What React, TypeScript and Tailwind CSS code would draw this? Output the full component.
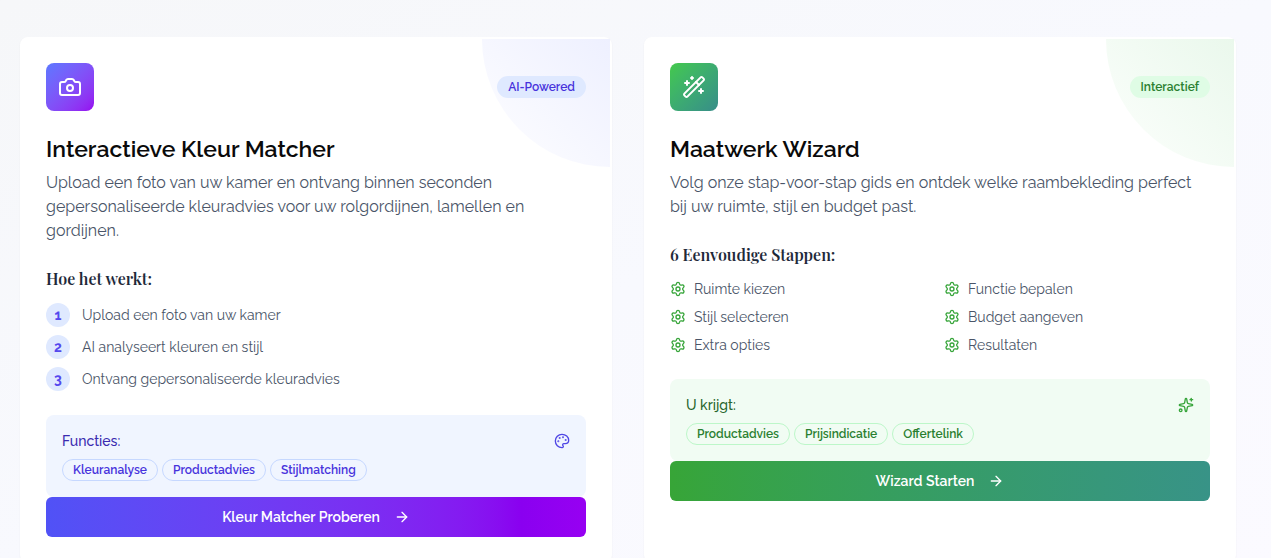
import type { ReactNode } from "react";
import {
  ArrowRight,
  Camera,
  Palette,
  Settings,
  Sparkles,
  WandSparkles,
} from "lucide-react";

const matcherSteps = [
  "Upload een foto van uw kamer",
  "AI analyseert kleuren en stijl",
  "Ontvang gepersonaliseerde kleuradvies",
];

const wizardSteps = [
  "Ruimte kiezen",
  "Functie bepalen",
  "Stijl selecteren",
  "Budget aangeven",
  "Extra opties",
  "Resultaten",
];

type Tone = "indigo" | "green";

const tones = {
  indigo: {
    corner: "from-[#eef0ff] to-[#fefeff]",
    icon: "from-[#5b78ff] to-[#9600f0]",
    badge: "bg-[#dfe9ff] text-[#4733dc]",
    panel: "bg-[#f0f5ff]",
    panelTitle: "text-[#3a2bb0]",
    panelIcon: "text-[#4f46e5]",
    chip: "border-[#c6d8ff] text-[#4733dc]",
    button: "from-[#5052f6] via-[#8a00f0] via-88% to-[#9700f2]",
  },
  green: {
    corner: "from-[#eaf8ec] to-[#fdfffd]",
    icon: "from-[#44c94a] to-[#388d88]",
    badge: "bg-[#dffce5] text-[#2a7f30]",
    panel: "bg-[#f1fcf3]",
    panelTitle: "text-[#26652c]",
    panelIcon: "text-[#37a53a]",
    chip: "border-[#bdf7c9] text-[#2a7f30]",
    button: "from-[#37a537] to-[#389387]",
  },
};

type CardProps = {
  tone: Tone;
  icon: ReactNode;
  badge: string;
  title: string;
  description: string;
  stepsTitle: string;
  panelTitle: string;
  panelIcon: ReactNode;
  chips: string[];
  action: string;
  children: ReactNode;
};

function ToolCard(props: CardProps) {
  const t = tones[props.tone];
  return (
    <article className="relative rounded-lg border-2 border-white bg-white p-6 shadow-xs">
      <div
        className={`absolute top-0 right-0 size-32 rounded-tr-md rounded-bl-full bg-linear-to-bl ${t.corner}`}
      />
      <header className="relative">
        <div className="flex items-center justify-between">
          <div
            className={`flex size-12 items-center justify-center rounded-lg bg-linear-to-br text-white ${t.icon}`}
          >
            {props.icon}
          </div>
          <span
            className={`rounded-full border border-transparent px-2.5 text-xs leading-5 font-semibold ${t.badge}`}
          >
            {props.badge}
          </span>
        </div>
        <h2 className="mt-5 text-[23px] leading-9 font-semibold text-[#0a0a0a]">
          {props.title}
        </h2>
        <p className="mt-1 text-base leading-6 text-[#4a5568]">
          {props.description}
        </p>
      </header>
      <h3 className="mt-6 font-[Playfair_Display,Liberation_Serif,serif] text-base leading-6 font-semibold text-[#1e2939]">
        {props.stepsTitle}
      </h3>
      {props.children}
      <section className={`mt-6 rounded-lg p-4 ${t.panel}`}>
        <div className="flex items-center justify-between">
          <h4 className={`text-sm leading-5 font-medium ${t.panelTitle}`}>
            {props.panelTitle}
          </h4>
          <span className={t.panelIcon}>{props.panelIcon}</span>
        </div>
        <ul className="mt-2 flex flex-wrap gap-1">
          {props.chips.map((chip) => (
            <li
              key={chip}
              className={`rounded-full border px-2.5 text-xs leading-5 font-semibold ${t.chip}`}
            >
              {chip}
            </li>
          ))}
        </ul>
      </section>
      <button
        type="button"
        className={`flex h-10 w-full items-center justify-center gap-3.5 rounded-md bg-linear-to-r text-sm font-semibold text-white ${t.button}`}
      >
        {props.action}
        <ArrowRight size={16} />
      </button>
    </article>
  );
}

export default function App() {
  return (
    <main className="min-h-screen bg-linear-to-br from-[#f6f7f9] via-[#f8f9fe] to-[#fbfaff] pt-[37px] pr-[35px] pl-5 font-[Raleway,Lato,sans-serif]">
      <div className="grid grid-cols-2 gap-8">
        <ToolCard
          tone="indigo"
          icon={<Camera size={24} />}
          badge="AI-Powered"
          title="Interactieve Kleur Matcher"
          description="Upload een foto van uw kamer en ontvang binnen seconden gepersonaliseerde kleuradvies voor uw rolgordijnen, lamellen en gordijnen."
          stepsTitle="Hoe het werkt:"
          panelTitle="Functies:"
          panelIcon={<Palette size={16} />}
          chips={["Kleuranalyse", "Productadvies", "Stijlmatching"]}
          action="Kleur Matcher Proberen"
        >
          <ol className="mt-3 flex flex-col gap-2">
            {matcherSteps.map((step, i) => (
              <li
                key={step}
                className="flex items-center gap-3 text-sm leading-5 text-[#4a5568]"
              >
                <span className="flex size-6 items-center justify-center rounded-full bg-[#dfe9ff] text-sm font-bold text-[#5548ee]">
                  {i + 1}
                </span>
                {step}
              </li>
            ))}
          </ol>
        </ToolCard>
        <ToolCard
          tone="green"
          icon={<WandSparkles size={24} />}
          badge="Interactief"
          title="Maatwerk Wizard"
          description="Volg onze stap-voor-stap gids en ontdek welke raambekleding perfect bij uw ruimte, stijl en budget past."
          stepsTitle="6 Eenvoudige Stappen:"
          panelTitle="U krijgt:"
          panelIcon={<Sparkles size={16} />}
          chips={["Productadvies", "Prijsindicatie", "Offertelink"]}
          action="Wizard Starten"
        >
          <ul className="mt-3 grid grid-cols-2 gap-2">
            {wizardSteps.map((step) => (
              <li
                key={step}
                className="flex items-center gap-2 text-sm leading-5 text-[#4a5568]"
              >
                <Settings size={16} className="text-[#37a53a]" />
                {step}
              </li>
            ))}
          </ul>
        </ToolCard>
      </div>
    </main>
  );
}
